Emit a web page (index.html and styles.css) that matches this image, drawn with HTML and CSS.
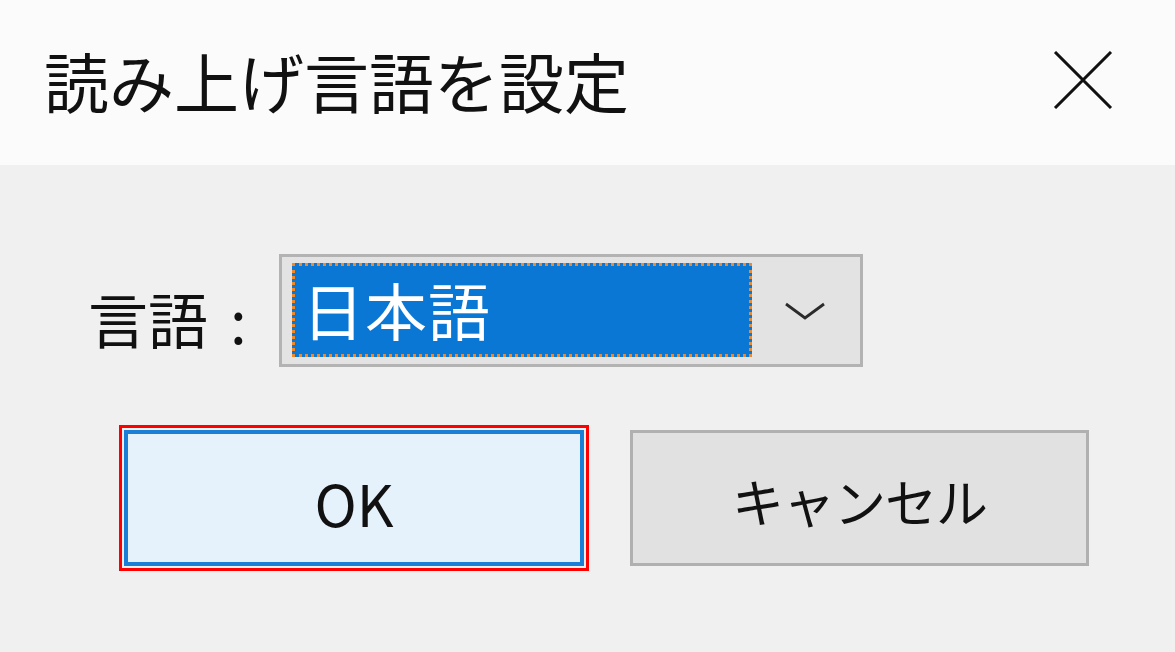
FILE: index.html
```html
<!DOCTYPE html>
<html lang="ja">
<head>
<meta charset="utf-8">
<link rel="stylesheet" href="styles.css">
</head>
<body>
<div class="dialog">
  <div class="titlebar">
    <div class="title">読み上げ言語を設定</div>
    <svg class="close" width="60" height="58" viewBox="0 0 60 58">
      <path d="M2 1 L58 57 M58 1 L2 57" stroke="#111" stroke-width="3" fill="none"/>
    </svg>
  </div>
  <div class="content">
    <div class="row">
      <span class="label">言語<span class="colon">:</span></span>
      <div class="combo">
        <div class="selection">日本語</div>
        <div class="dropdown">
          <svg width="42" height="20" viewBox="0 0 42 20">
            <path d="M2 3 L21 17 L40 3" stroke="#2b2b2b" stroke-width="2.8" fill="none"/>
          </svg>
        </div>
      </div>
    </div>
    <div class="buttons">
      <div class="btn btn-ok">OK</div>
      <div class="btn btn-cancel">キャンセル</div>
    </div>
  </div>
</div>
</body>
</html>
```
FILE: styles.css
```css
html, body {
  margin: 0;
  padding: 0;
}
body {
  width: 1175px;
  height: 652px;
  overflow: hidden;
  background: #f0f0f0;
  font-family: "Noto Sans CJK JP", "Noto Sans", sans-serif;
  color: #111;
}
.dialog {
  display: flex;
  flex-direction: column;
  height: 652px;
}
.titlebar {
  height: 165px;
  background: #fbfbfb;
  display: flex;
  align-items: center;
  justify-content: space-between;
  padding: 0 62px 0 44px;
}
.title {
  font-size: 65px;
  line-height: 1;
  margin-top: -4px;
}
.close {
  margin-top: -6px;
}
.content {
  flex: 1;
  background: #f0f0f0;
}
.row {
  display: flex;
  align-items: center;
  margin-top: 89px;
  padding-left: 88px;
}
.label {
  font-size: 60px;
  line-height: 1;
  width: 191px;
  margin-top: 14px;
}
.colon {
  margin-left: 22px;
}
.combo {
  width: 578px;
  height: 107px;
  border: 3px solid #b3b3b3;
  background: #e3e3e3;
  display: flex;
  align-items: flex-start;
}
.selection {
  margin: 6px 0 0 10px;
  width: 460px;
  height: 94px;
  box-sizing: border-box;
  border: 3px dotted #ee8a2a;
  background: #0a77d5;
  color: #fff;
  font-size: 62px;
  line-height: 86px;
  padding-left: 7px;
  letter-spacing: 1px;
}
.dropdown {
  flex: 1;
  height: 100%;
  display: flex;
  align-items: center;
  justify-content: center;
}
.dropdown svg {
  margin-left: -2px;
}
.buttons {
  display: flex;
  gap: 46px;
  margin-top: 63px;
  padding-left: 124px;
}
.btn {
  height: 136px;
  box-sizing: border-box;
  display: flex;
  align-items: center;
  justify-content: center;
  line-height: 1;
}
.btn-ok {
  width: 460px;
  background: #e5f1fb;
  border: 4px solid #1b7fd6;
  outline: 3px solid #ff0000;
  outline-offset: 2px;
  font-size: 57px;
  padding-top: 8px;
}
.btn-cancel {
  width: 459px;
  background: #e1e1e1;
  border: 3px solid #b0b0b0;
  font-size: 52px;
  padding-top: 6px;
  letter-spacing: -1px;
}
```
